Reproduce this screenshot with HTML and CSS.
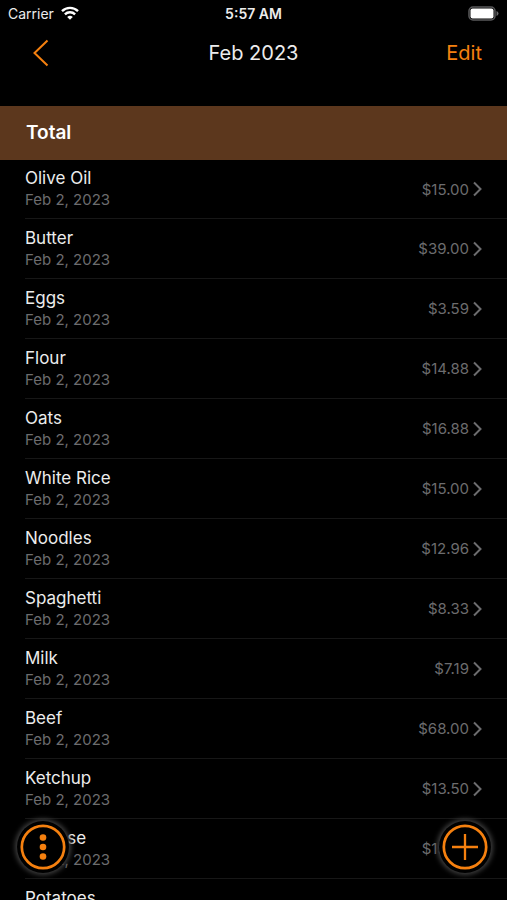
FILE: index.html
```html
<!DOCTYPE html>
<html lang="en">
<head>
<meta charset="utf-8">
<meta name="viewport" content="width=device-width, initial-scale=1">
<title>Feb 2023</title>
<link rel="stylesheet" href="styles.css">
</head>
<body>
<div class="status">
  <div class="carrier">Carrier
    <svg class="wifi" viewBox="0 0 18 14" aria-hidden="true"><path d="M1 5.2a11.4 11.4 0 0 1 16 0M3.900 8.400a7.2 7.2 0 0 1 10.200 0" fill="none" stroke="#fff" stroke-width="2.400"/><path d="M6.200 10.900a4.300 4.300 0 0 1 5.600 0L9 13.700z" fill="#fff"/></svg>
  </div>
  <time class="clock">5:57 AM</time>
  <svg class="battery" viewBox="0 0 31 15" aria-hidden="true"><rect x="1" y="1" width="26" height="13" rx="4" fill="#000" stroke="#59595b" stroke-width="1.500"/><rect x="2.500" y="2.500" width="23" height="10" rx="2" fill="#fff"/><path d="M28.500 5v5q2-.8 2-2.500t-2-2.500z" fill="#69696b"/></svg>
</div>
<header class="nav">
  <button class="back" type="button" aria-label="Back"><svg viewBox="0 0 16 28" aria-hidden="true"><path d="M14.500 1.500 1.500 14l13 12.500" fill="none" stroke="currentColor" stroke-width="2"/></svg></button>
  <h1 class="title">Feb 2023</h1>
  <button class="edit" type="button">Edit</button>
</header>
<main>
  <h2 class="total">Total</h2>
  <ul class="list" id="list"></ul>
</main>
<button class="fab fab-menu" type="button" aria-label="More options"><svg viewBox="0 0 46 46" aria-hidden="true"><circle cx="23" cy="23" r="21.200" fill="none" stroke="currentColor" stroke-width="2.700"/><g fill="currentColor"><circle cx="23" cy="13.500" r="3.300"/><circle cx="23" cy="23" r="3.300"/><circle cx="23" cy="32.500" r="3.300"/></g></svg></button>
<button class="fab fab-add" type="button" aria-label="Add item"><svg viewBox="0 0 46 46" aria-hidden="true"><circle cx="23" cy="23" r="21.200" fill="none" stroke="currentColor" stroke-width="2.700"/><path d="M23 10v26M10 23h26" stroke="currentColor" stroke-width="2.300"/></svg></button>
<script src="script.js"></script>
</body>
</html>
```
FILE: styles.css
```css
* { box-sizing: border-box; }
body {
  margin: 0;
  height: 100vh;
  overflow: hidden;
  background: #000;
  color: #ececec;
  font-family: Inter, "Liberation Sans", sans-serif;
}
button {
  padding: 0;
  border: 0;
  background: none;
  color: #f5800f;
  font: inherit;
  cursor: pointer;
}
svg { display: block; }
h1, h2, ul { margin: 0; padding: 0; }
.status, .nav {
  display: grid;
  grid-template-columns: 1fr auto 1fr;
  align-items: center;
}
.status {
  height: 26px;
  padding: 0 8px;
  font-size: 14px;
}
.carrier {
  display: flex;
  align-items: center;
  gap: 7px;
}
.wifi { width: 18px; height: 14px; }
.clock { font-weight: 600; }
.battery { width: 31px; height: 15px; justify-self: end; }
.nav {
  height: 80px;
  padding: 0 25px 26px;
  font-size: 20px;
}
.back { justify-self: start; padding-left: 8px; }
.back svg { width: 16px; height: 28px; }
.title { font-size: 20px; font-weight: 400; }
.edit { justify-self: end; }
.total {
  height: 54px;
  padding-left: 26px;
  background: #5c371d;
  color: #fff;
  font-size: 19px;
  font-weight: 600;
  line-height: 54px;
}
.list { list-style: none; }
.row {
  display: flex;
  align-items: center;
  justify-content: space-between;
  height: 60px;
  margin-left: 25px;
  padding-right: 25px;
  border-bottom: 1px solid #171717;
}
.row:first-child { height: 59px; }
.name { font-size: 17px; line-height: 22px; }
.date { color: #6c6c6e; font-size: 15px; line-height: 22px; }
.amount {
  display: flex;
  align-items: center;
  gap: 4px;
  color: #6c6c6e;
  font-size: 15px;
}
.amount svg { width: 9px; height: 16px; }
.fab {
  position: fixed;
  bottom: 30px;
  width: 46px;
  height: 46px;
  border-radius: 50%;
  background: #000;
  box-shadow: 0 0 0 3px #000, 0 0 5px 5px #404040;
}
.fab svg { width: 46px; height: 46px; }
.fab-menu { left: 20px; }
.fab-add { right: 19px; }
```
FILE: script.js
```js
const items = [
  ["Olive Oil", "$15.00"],
  ["Butter", "$39.00"],
  ["Eggs", "$3.59"],
  ["Flour", "$14.88"],
  ["Oats", "$16.88"],
  ["White Rice", "$15.00"],
  ["Noodles", "$12.96"],
  ["Spaghetti", "$8.33"],
  ["Milk", "$7.19"],
  ["Beef", "$68.00"],
  ["Ketchup", "$13.50"],
  ["Cheese", "$15.00"],
  ["Potatoes", "$10.00"]
];
document.getElementById("list").innerHTML = items.map(([name, price]) => `
  <li class="row">
    <div><div class="name">${name}</div><div class="date">Feb 2, 2023</div></div>
    <div class="amount">${price}<svg viewBox="0 0 9 16" aria-hidden="true"><path d="M1 1.500 7.500 8 1 14.500" fill="none" stroke="currentColor" stroke-width="2"/></svg></div>
  </li>`).join("");
```
